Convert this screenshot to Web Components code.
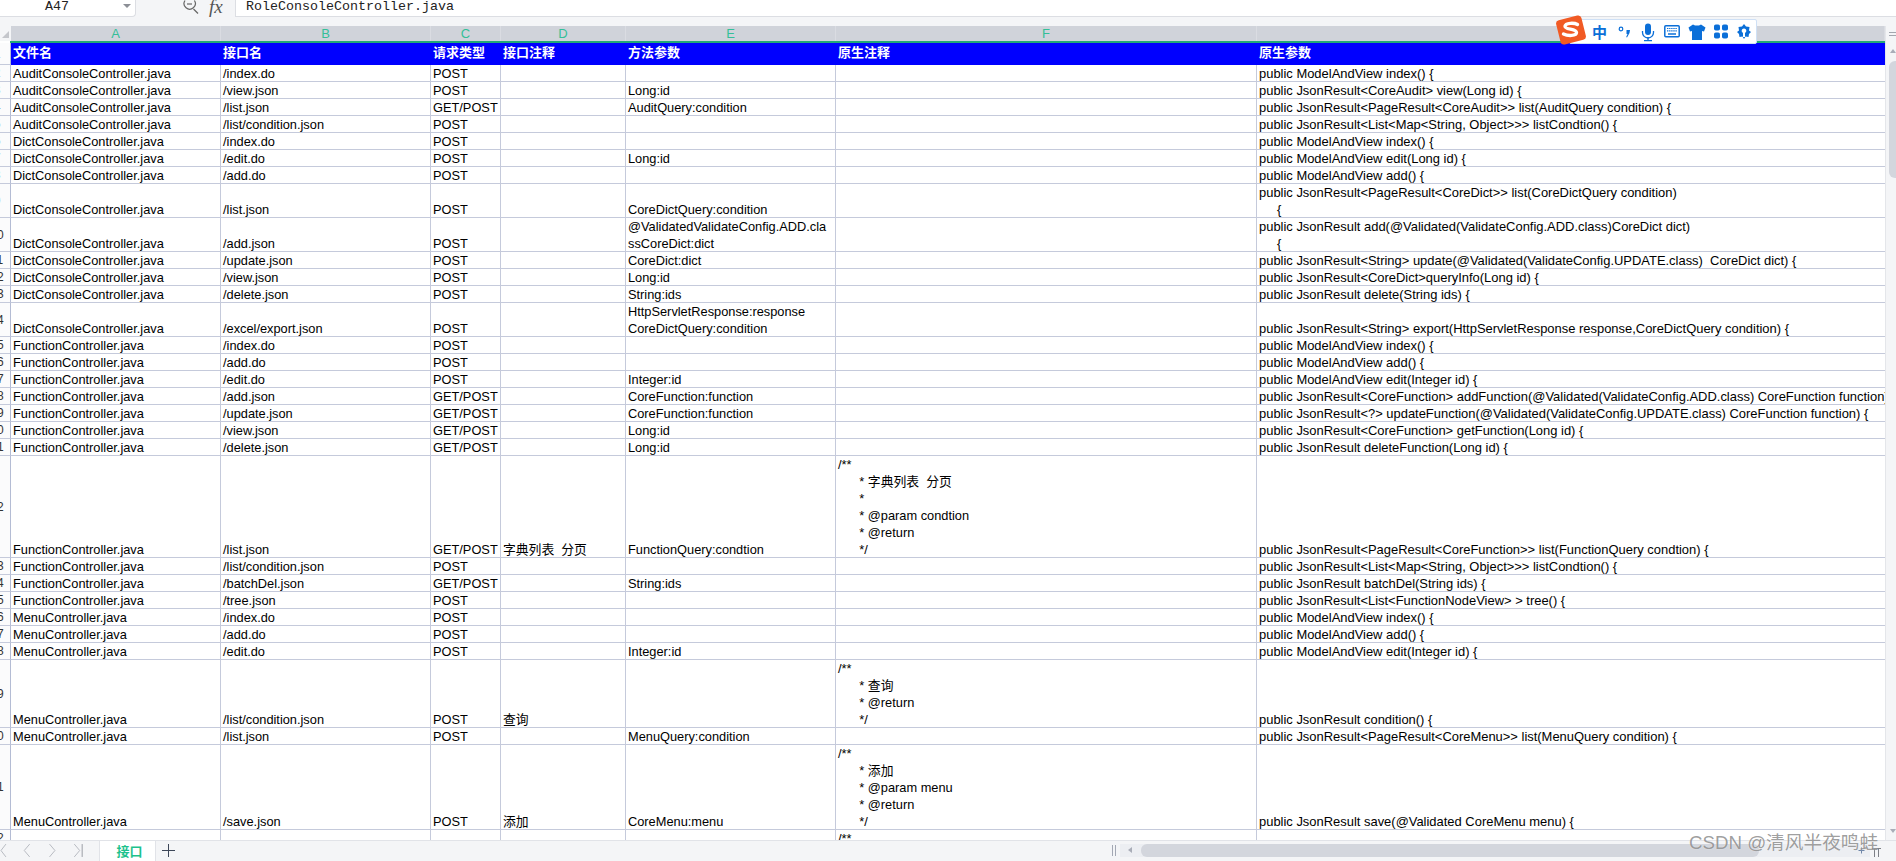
<!DOCTYPE html>
<html lang="zh">
<head>
<meta charset="utf-8">
<title>接口</title>
<style>
  html, body { margin: 0; height: 100%; overflow: hidden; background: #f4f5f7; }
  body { font-family: "Liberation Sans", "Noto Sans CJK SC", sans-serif; }
</style>
</head>
<body>
<wps-app>
  <formula-bar cell="A47" value="RoleConsoleController.java"></formula-bar>
  <sheet-grid id="grid"></sheet-grid>
  <sheet-tabs tab="接口"></sheet-tabs>
  <ime-toolbar></ime-toolbar>
  <csdn-mark>CSDN @清风半夜鸣蛙</csdn-mark>
</wps-app>

<script>
// App shell
class WpsApp extends HTMLElement {
  constructor() {
    super();
    this.attachShadow({ mode: 'open' });
    this.shadowRoot.innerHTML = `
      <style>
        :host {
          display: flex;
          flex-direction: column;
          position: relative;
          width: 1896px;
          height: 861px;
          overflow: hidden;
        }
      </style>
      <slot></slot>
    `;
  }
}

// Name box + fx + formula input
class FormulaBar extends HTMLElement {
  constructor() {
    super();
    this.attachShadow({ mode: 'open' });
  }

  connectedCallback() {
    const cell = this.getAttribute('cell') || '';
    const value = this.getAttribute('value') || '';
    this.shadowRoot.innerHTML = `
      <style>
        :host {
          display: flex;
          flex: none;
          height: 18px;
          margin-bottom: 8px;
          background: #f4f5f7;
          font: 13.33px/14px "Liberation Mono", monospace;
          color: #222;
        }
        .name {
          width: 136px;
          height: 17px;
          box-sizing: border-box;
          display: flex;
          justify-content: space-between;
          align-items: center;
          padding: 0 4px 2px 45px;
          background: #fff;
          border: solid #dcdee3;
          border-width: 0 1px 1px 0;
          border-radius: 0 0 4px 0;
        }
        .caret {
          width: 0;
          height: 0;
          margin-top: -2px;
          border: 4px solid transparent;
          border-top: 4px solid #8c8f96;
          border-bottom: 0;
        }
        .tools {
          width: 99px;
          display: flex;
          align-items: flex-start;
          padding-left: 47px;
          box-sizing: border-box;
          gap: 9px;
        }
        .fx {
          font: italic 19px/14px "Liberation Serif", serif;
          color: #555;
        }
        svg { display: block; flex: none; }
        .input {
          flex: 1;
          height: 17px;
          box-sizing: border-box;
          padding: 0 0 2px 10px;
          background: #fff;
          border: solid #dcdee3;
          border-width: 0 0 1px 1px;
          white-space: pre;
        }
      </style>
      <div class="name"><span>${cell}</span><i class="caret"></i></div>
      <div class="tools">
        <svg width="17" height="14" viewBox="0 0 17 14" fill="none" stroke="#666" stroke-width="1.2">
          <path d="M2 0.5a5.6 5.6 0 1 0 9.4 0"/><path d="M4 4h5"/><path d="M10.5 9l4.5 4.5"/>
        </svg>
        <span class="fx">fx</span>
      </div>
      <div class="input">${value}</div>
    `;
  }
}

// Column widths shared by the header strip and all rows
const COLS = '11px 210px 210px 70px 125px 210px 421px 628px';

class SheetGrid extends HTMLElement {
  constructor() {
    super();
    this.attachShadow({ mode: 'open' });
    this.shadowRoot.innerHTML = `
      <style>
        :host {
          display: flex;
          flex: none;
          height: 814px;
          background: #fff;
          overflow: hidden;
        }
        .body {
          width: 1885px;
          flex: none;
          overflow: hidden;
          background: #fff;
        }
        .letters {
          display: grid;
          grid-template-columns: ${COLS};
          height: 15px;
          background: #d0d3da;
          font-size: 13px;
          line-height: 15px;
          color: #34bf98;
          text-align: center;
        }
        .letters span { border-right: 1px solid #dadce2; }
        .letters span:first-child { background: #f4f5f7; border: 0; position: relative; }
        .letters span:first-child::after {
          content: '';
          position: absolute;
          left: 2px;
          top: 5px;
          border: solid transparent;
          border-width: 0 0 7px 7px;
          border-bottom-color: #c4c6cb;
        }
        .green { height: 2px; background: #22a878; margin-left: 10px; }
        .bar {
          width: 11px;
          flex: none;
          box-sizing: border-box;
          position: relative;
          background: #f4f5f7;
          border-left: 1px solid #e4e6ea;
        }
        .bar b {
          position: absolute;
          left: 3px;
          width: 8px;
          height: 1px;
          background: #a2a6ae;
        }
        .bar i {
          position: absolute;
          left: 4px;
          top: 23px;
          border: solid transparent;
          border-width: 0 3px 4px 3px;
          border-bottom-color: #a9adb8;
        }
        .bar i.down {
          top: 803px;
          border-width: 4px 3px 0 3px;
          border-color: #a9adb8 transparent transparent;
        }
        .thumb {
          position: absolute;
          left: 3px;
          right: 0;
          top: 35px;
          height: 117px;
          background: #d3d6dd;
          border-radius: 6px 0 0 6px;
        }
      </style>
      <div class="body">
        <div class="letters">
          <span></span><span>A</span><span>B</span><span>C</span><span>D</span><span>E</span><span>F</span><span>G</span>
        </div>
        <div class="green"></div>
        <slot></slot>
      </div>
      <div class="bar">
        <b style="top:6px"></b><b style="top:9px"></b>
        <i></i>
        <div class="thumb"></div>
        <i class="down"></i>
      </div>
    `;
  }
}

class SheetRow extends HTMLElement {
  constructor() {
    super();
    this.attachShadow({ mode: 'open' });
  }

  connectedCallback() {
    const num = this.getAttribute('num') || '';
    const lines = Number(this.getAttribute('lines') || 1);
    const header = this.hasAttribute('header');
    this.shadowRoot.innerHTML = `
      <style>
        :host {
          display: grid;
          grid-template-columns: ${COLS};
          height: ${header ? 22 : lines * 17}px;
        }
        /* only the right end of two digit row numbers is on screen */
        .num {
          position: relative;
          overflow: hidden;
          background: #fbfbfc;
          border-right: 1px solid #b4bcd4;
          border-bottom: 1px solid #c5cadb;
          font-size: 12px;
          color: #333;
        }
        .num span {
          position: absolute;
          left: -23px;
          width: 40px;
          top: 50%;
          margin-top: -7px;
          line-height: 14px;
          text-align: center;
        }
      </style>
      <div class="num"><span>${num}</span></div>
      <slot></slot>
    `;
  }
}

class SheetCell extends HTMLElement {
  constructor() {
    super();
    this.attachShadow({ mode: 'open' });
    this.shadowRoot.innerHTML = `
      <style>
        :host {
          display: flex;
          align-items: flex-end;
          min-width: 0;
          overflow: hidden;
          box-sizing: border-box;
          padding-left: 2px;
          border-right: 1px solid #c5cadb;
          border-bottom: 1px solid #c5cadb;
          background: #fff;
          color: #000;
          font: 12.8px/17px "Liberation Sans", "Noto Sans CJK SC", sans-serif;
        }
        :host([head]) {
          background: #00f;
          color: #fff;
          border: 0;
          padding-bottom: 2px;
          font-weight: bold;
          font-size: 13px;
          line-height: 20px;
          align-items: center;
        }
        :host([last]) { border-right: 0; font-size: 12.95px; }
        :host([head][last]) { font-size: 13px; }
        .t { white-space: pre; margin-bottom: -1px; }
        :host([head]) .t { margin-bottom: 0; }
      </style>
      <div class="t"><slot></slot></div>
    `;
  }
}

class SheetTabs extends HTMLElement {
  constructor() {
    super();
    this.attachShadow({ mode: 'open' });
  }

  connectedCallback() {
    const tab = this.getAttribute('tab') || '';
    this.shadowRoot.innerHTML = `
      <style>
        :host {
          display: flex;
          flex: 1;
          align-items: stretch;
          box-sizing: border-box;
          background: #f4f5f7;
          border-top: 1px solid #e1e3e8;
        }
        svg { display: block; flex: none; }
        .nav { width: 100px; flex: none; border-right: 1px solid #e1e3e8; box-sizing: border-box; }
        .tab {
          width: 56px;
          flex: none;
          box-sizing: border-box;
          padding-left: 4px;
          background: #fff;
          border-right: 1px solid #e1e3e8;
          text-align: center;
          font: bold 13px/20px "Noto Sans CJK SC", sans-serif;
          color: #1dc28d;
        }
        .plus { width: 26px; flex: none; }
        .grip { margin-left: 929px; width: 9px; }
        .track {
          flex: none;
          width: 738px;
          height: 13px;
          margin-top: 3px;
          background: #eceef2;
          position: relative;
        }
        .track i {
          position: absolute;
          left: 8px;
          top: 3px;
          border: solid transparent;
          border-width: 3px 4px 3px 0;
          border-right-color: #a9adb8;
        }
        .track b {
          position: absolute;
          left: 21px;
          top: 0;
          width: 618px;
          height: 13px;
          background: #d3d6dd;
          border-radius: 6px;
        }
        .zoom { width: 38px; }
      </style>
      <svg class="nav" viewBox="0 0 100 20" fill="none" stroke="#b7bac1" stroke-width="1">
        <path d="M6 3l-5 6.5 5 6.5"/>
        <path d="M30 3l-5.500 6.500 5.500 6.500"/>
        <path d="M50 3l5.500 6.500-5.500 6.500"/>
        <path d="M75 3l5.500 6.500-5.500 6.500"/>
        <path d="M83 3v13" stroke="#9a9da5"/>
      </svg>
      <div class="tab">${tab}</div>
      <svg class="plus" viewBox="0 0 26 20" fill="none" stroke="#3c4658" stroke-width="1">
        <path d="M6 9.500h13M12.500 3v13"/>
      </svg>
      <svg class="grip" viewBox="0 0 9 20" fill="none" stroke="#a3a8b4" stroke-width="1">
        <path d="M1.500 4v11M4.500 4v11"/>
      </svg>
      <div class="track"><i></i><b></b></div>
      <svg class="zoom" viewBox="0 0 38 20" fill="none" stroke-width="1">
        <rect x="0" y="3" width="12" height="13" fill="#eceef2" stroke="none"/>
        <path d="M0.500 9.500h6M3.500 6.500v6" stroke="#6f86a8"/>
        <path d="M14 7.500h9M16.500 8v8M20.500 8v8" stroke="#7d8087"/>
      </svg>
    `;
  }
}

// Sogou input method strip, floating over the sheet
class ImeToolbar extends HTMLElement {
  constructor() {
    super();
    this.attachShadow({ mode: 'open' });
    this.shadowRoot.innerHTML = `
      <style>
        :host {
          position: absolute;
          left: 1555px;
          top: 15px;
          width: 202px;
          height: 30px;
          display: block;
        }
        .box {
          position: absolute;
          left: 14px;
          right: 0;
          top: 4px;
          height: 25px;
          box-sizing: border-box;
          background: #fff;
          border: 1px solid #cfe0f5;
          border-radius: 2px;
          display: flex;
          align-items: center;
          color: #0b6fd8;
        }
        .zh {
          margin-left: 22px;
          font: bold 15px/23px "Noto Sans CJK SC", sans-serif;
          width: 15px;
        }
        .box svg { display: block; flex: none; position: absolute; top: 3px; }
        .logo { position: absolute; left: 0; top: 0; display: block; }
      </style>
      <div class="box">
        <span class="zh">中</span>
        <svg style="left:48px" width="16" height="18" viewBox="0 0 16 18" fill="#0b6fd8">
          <circle cx="3" cy="6" r="1.800" fill="none" stroke="#0b6fd8" stroke-width="1.200"/>
          <path d="M8.500 7H12l-.5 3-2.500 4.500-.8-.4 1.300-3.100H8.500z"/>
        </svg>
        <svg style="left:70px" width="16" height="19" viewBox="0 0 16 19" fill="#0b6fd8">
          <rect x="5" y="0.500" width="6" height="11.500" rx="3"/>
          <path d="M2.500 8v1.500a5.500 5.500 0 0 0 11 0V8" fill="none" stroke="#0b6fd8" stroke-width="1.300"/>
          <path d="M7.300 14h1.400v3H12v1.200H4V17h3.300z"/>
        </svg>
        <svg style="left:94px" width="16" height="16" viewBox="0 0 16 16">
          <rect x="0.800" y="2.800" width="14.400" height="11" rx="1" fill="none" stroke="#0b6fd8" stroke-width="1.500"/>
          <path d="M3 5.500h10M3 7.800h10" stroke="#0b6fd8" stroke-width="1.200" stroke-dasharray="1.400 .7"/>
          <path d="M4 11h8" stroke="#0b6fd8" stroke-width="1.500"/>
        </svg>
        <svg style="left:118px" width="18" height="18" viewBox="0 0 18 18" fill="#0b6fd8">
          <path d="M5 1.500l2 1h4l2-1 4.500 3-1.500 4-2-.5V17H4V8l-2 .5-1.500-4z"/>
        </svg>
        <svg style="left:143px" width="16" height="17" viewBox="0 0 16 17" fill="#0b6fd8">
          <rect x="1" y="1.500" width="6" height="6" rx="1.800"/>
          <rect x="9" y="1.500" width="6" height="6" rx="1.800"/>
          <rect x="1" y="9.500" width="6" height="6" rx="1.800"/>
          <rect x="9" y="9.500" width="6" height="6" rx="1.800"/>
        </svg>
        <svg style="left:167px" width="14" height="17" viewBox="0 0 14 17" fill="#0b6fd8">
          <path d="M7 1l2 2.500 3.500.5-.5 3.500 2 1.500-2 2-.5 3-3-.5L7 16l-1.500-2.500-3 .5-.5-3-2-2 2-1.500L1.500 4 5 3.500z"/>
          <path d="M7 5.500a2.300 2.300 0 0 1 1 4.400V14H6V9.900a2.300 2.300 0 0 1 1-4.400z" fill="#fff"/>
        </svg>
      </div>
      <svg class="logo" width="32" height="30" viewBox="0 0 32 30">
        <rect x="3" y="2.500" width="26" height="25" rx="3.500" fill="#f15a24" transform="rotate(-14 16 15)"/>
        <path d="M22.500 9.500c-3-1.700-12-2-12.500 1.800-.4 3.700 11.500 2 11.500 6.300 0 3.600-9 3.400-13 1.400" fill="none" stroke="#fff" stroke-width="3.400" stroke-linecap="round"/>
      </svg>
    `;
  }
}

class CsdnMark extends HTMLElement {
  constructor() {
    super();
    this.attachShadow({ mode: 'open' });
    this.shadowRoot.innerHTML = `
      <style>
        :host {
          position: absolute;
          left: 1689px;
          top: 831px;
          display: block;
          font: 18.7px/24px "Liberation Sans", "Noto Sans CJK SC", sans-serif;
          color: rgba(96, 96, 96, 0.62);
          text-shadow: 0 0 1px rgba(255, 255, 255, 0.8);
          white-space: nowrap;
        }
      </style>
      <slot></slot>
    `;
  }
}

customElements.define('wps-app', WpsApp);
customElements.define('formula-bar', FormulaBar);
customElements.define('sheet-grid', SheetGrid);
customElements.define('sheet-row', SheetRow);
customElements.define('sheet-cell', SheetCell);
customElements.define('sheet-tabs', SheetTabs);
customElements.define('ime-toolbar', ImeToolbar);
customElements.define('csdn-mark', CsdnMark);

// Sheet content: [file, path, method, note, args, raw comment, raw signature, height in lines]
const MV = 'public ModelAndView ';
const JR = 'public JsonResult';
const AU = 'AuditConsoleController.java';
const DI = 'DictConsoleController.java';
const FU = 'FunctionController.java';
const ME = 'MenuController.java';
const IND = '      ';
const rows = [
  [AU, '/index.do', 'POST', '', '', '', MV + 'index() {'],
  [AU, '/view.json', 'POST', '', 'Long:id', '', JR + '<CoreAudit> view(Long id) {'],
  [AU, '/list.json', 'GET/POST', '', 'AuditQuery:condition', '', JR + '<PageResult<CoreAudit>> list(AuditQuery condition) {'],
  [AU, '/list/condition.json', 'POST', '', '', '', JR + '<List<Map<String, Object>>> listCondtion() {'],
  [DI, '/index.do', 'POST', '', '', '', MV + 'index() {'],
  [DI, '/edit.do', 'POST', '', 'Long:id', '', MV + 'edit(Long id) {'],
  [DI, '/add.do', 'POST', '', '', '', MV + 'add() {'],
  [DI, '/list.json', 'POST', '', 'CoreDictQuery:condition', '', JR + '<PageResult<CoreDict>> list(CoreDictQuery condition)\n     {', 2],
  [DI, '/add.json', 'POST', '', '@ValidatedValidateConfig.ADD.cla\nssCoreDict:dict', '', JR + ' add(@Validated(ValidateConfig.ADD.class)CoreDict dict)\n     {', 2],
  [DI, '/update.json', 'POST', '', 'CoreDict:dict', '', JR + '<String> update(@Validated(ValidateConfig.UPDATE.class)  CoreDict dict) {'],
  [DI, '/view.json', 'POST', '', 'Long:id', '', JR + '<CoreDict>queryInfo(Long id) {'],
  [DI, '/delete.json', 'POST', '', 'String:ids', '', JR + ' delete(String ids) {'],
  [DI, '/excel/export.json', 'POST', '', 'HttpServletResponse:response\nCoreDictQuery:condition', '', JR + '<String> export(HttpServletResponse response,CoreDictQuery condition) {', 2],
  [FU, '/index.do', 'POST', '', '', '', MV + 'index() {'],
  [FU, '/add.do', 'POST', '', '', '', MV + 'add() {'],
  [FU, '/edit.do', 'POST', '', 'Integer:id', '', MV + 'edit(Integer id) {'],
  [FU, '/add.json', 'GET/POST', '', 'CoreFunction:function', '', JR + '<CoreFunction> addFunction(@Validated(ValidateConfig.ADD.class) CoreFunction function) {'],
  [FU, '/update.json', 'GET/POST', '', 'CoreFunction:function', '', JR + '<?> updateFunction(@Validated(ValidateConfig.UPDATE.class) CoreFunction function) {'],
  [FU, '/view.json', 'GET/POST', '', 'Long:id', '', JR + '<CoreFunction> getFunction(Long id) {'],
  [FU, '/delete.json', 'GET/POST', '', 'Long:id', '', JR + ' deleteFunction(Long id) {'],
  [FU, '/list.json', 'GET/POST', '字典列表  分页', 'FunctionQuery:condtion',
    `/**\n${IND}* 字典列表  分页\n${IND}*\n${IND}* @param condtion\n${IND}* @return\n${IND}*/`,
    JR + '<PageResult<CoreFunction>> list(FunctionQuery condtion) {', 6],
  [FU, '/list/condition.json', 'POST', '', '', '', JR + '<List<Map<String, Object>>> listCondtion() {'],
  [FU, '/batchDel.json', 'GET/POST', '', 'String:ids', '', JR + ' batchDel(String ids) {'],
  [FU, '/tree.json', 'POST', '', '', '', JR + '<List<FunctionNodeView> > tree() {'],
  [ME, '/index.do', 'POST', '', '', '', MV + 'index() {'],
  [ME, '/add.do', 'POST', '', '', '', MV + 'add() {'],
  [ME, '/edit.do', 'POST', '', 'Integer:id', '', MV + 'edit(Integer id) {'],
  [ME, '/list/condition.json', 'POST', '查询', '', `/**\n${IND}* 查询\n${IND}* @return\n${IND}*/`, JR + ' condition() {', 4],
  [ME, '/list.json', 'POST', '', 'MenuQuery:condition', '', JR + '<PageResult<CoreMenu>> list(MenuQuery condition) {'],
  [ME, '/save.json', 'POST', '添加', 'CoreMenu:menu', `/**\n${IND}* 添加\n${IND}* @param menu\n${IND}* @return\n${IND}*/`, JR + ' save(@Validated CoreMenu menu) {', 5],
  ['', '', '', '', '', '/**', ''],
];

const grid = document.getElementById('grid');

function addRow(values, num, lines, header) {
  const row = document.createElement('sheet-row');
  row.setAttribute('num', num);
  row.setAttribute('lines', lines);
  if (header) row.setAttribute('header', '');
  values.forEach((text, i) => {
    const cell = document.createElement('sheet-cell');
    if (header) cell.setAttribute('head', '');
    if (i === 6) cell.setAttribute('last', '');
    cell.textContent = text;
    row.appendChild(cell);
  });
  grid.appendChild(row);
}

addRow(['文件名', '接口名', '请求类型', '接口注释', '方法参数', '原生注释', '原生参数'], '1', 1, true);
rows.forEach((r, i) => addRow(r.slice(0, 7), String(i + 2), r[7] || 1, false));
</script>
</body>
</html>
